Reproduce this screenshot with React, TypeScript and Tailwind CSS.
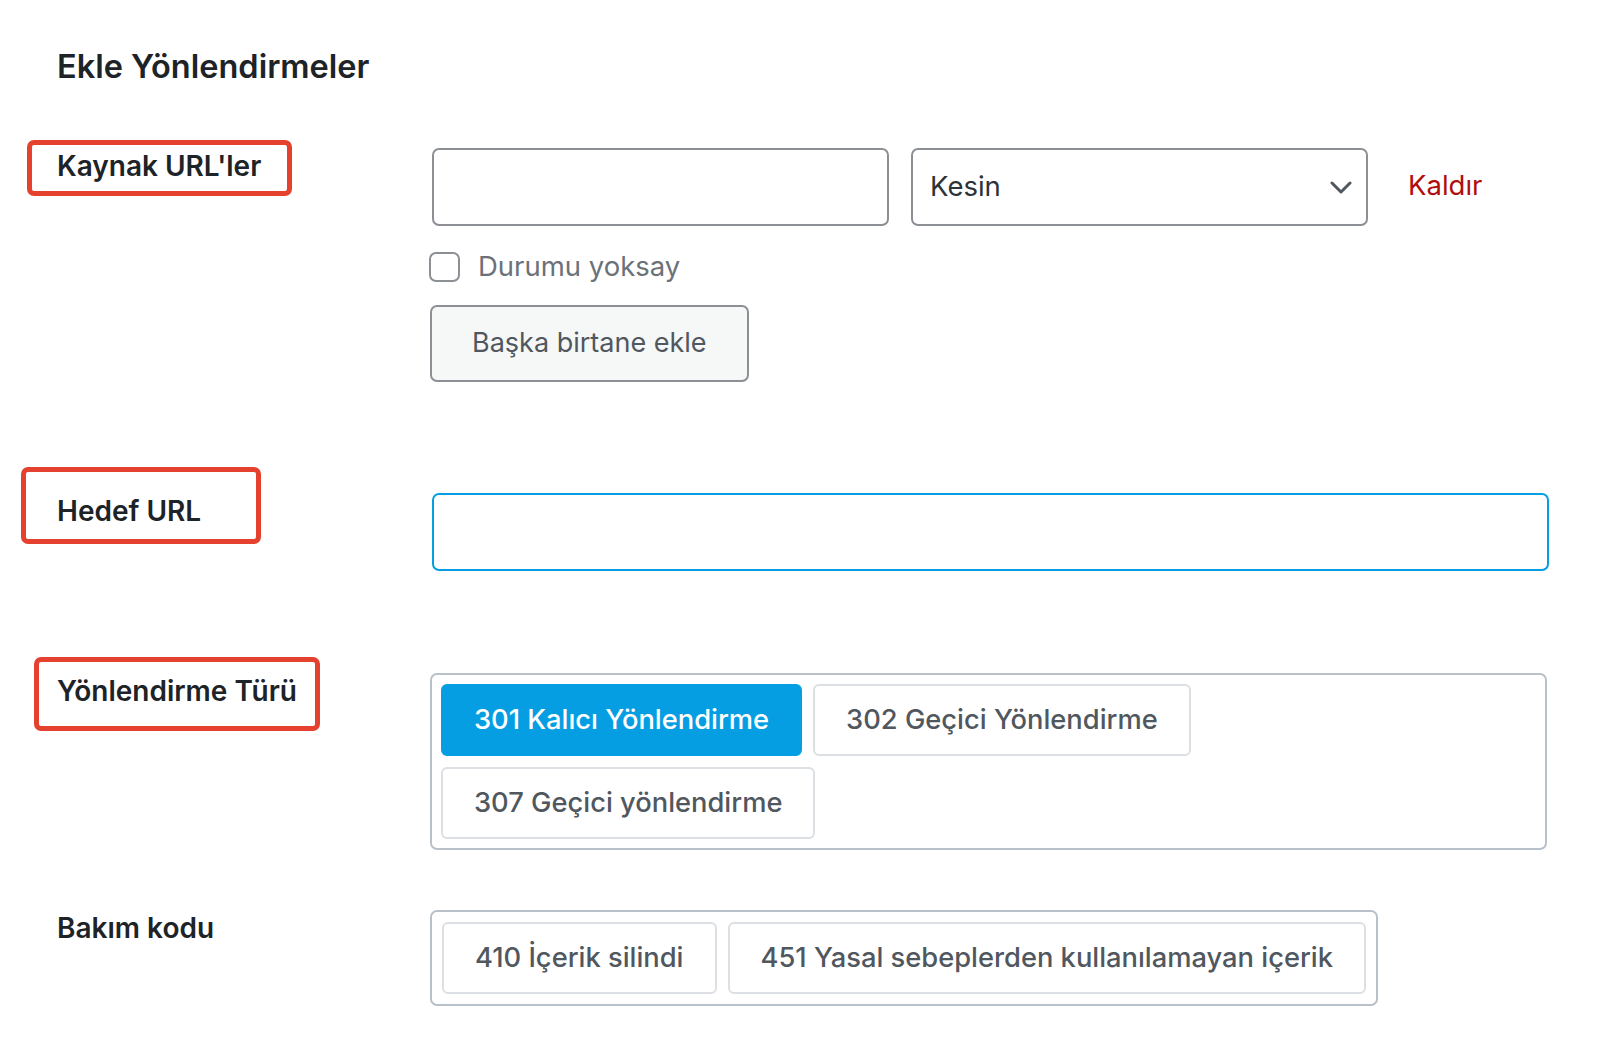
import React from "react";

const font = { fontFamily: "Inter, 'Noto Sans', 'Liberation Sans', sans-serif" };

function Chevron() {
  return (
    <svg width="22" height="13" viewBox="0 0 22 13" fill="none">
      <path d="M2 2 L11 11 L20 2" stroke="#50575e" strokeWidth="3" strokeLinecap="round" strokeLinejoin="round" />
    </svg>
  );
}

function OptButton({ children, active }: { children: React.ReactNode; active?: boolean }) {
  return (
    <div
      className={
        active
          ? "h-[72px] px-[31px] flex items-center rounded-[6px] border-2 border-[#069ee3] bg-[#069ee3] text-white text-[27.3px] font-medium whitespace-nowrap"
          : "h-[72px] px-[31px] flex items-center rounded-[6px] border-2 border-[#dcdfe3] bg-white text-[#50575e] text-[27.3px] font-medium whitespace-nowrap"
      }
    >
      {children}
    </div>
  );
}

export default function App() {
  return (
    <div className="w-[1602px] h-[1050px] bg-white text-[#1d2327] overflow-hidden" style={font}>
      <div className="pt-[48px] pl-[57px]">
        <h1 className="text-[32.5px] leading-[38px] font-semibold text-[#1d2327]">Ekle Yönlendirmeler</h1>
      </div>

      {/* Row 1: Kaynak URL'ler */}
      <div className="flex items-start mt-[62px]">
        <div className="w-[431px] shrink-0">
          <div className="ml-[27px] -mt-[8px] w-[265px] h-[56px] border-[5px] border-[#e5412f] rounded-[7px] pl-[25px] pt-[5px]">
            <div className="text-[28px] leading-[32px] font-semibold whitespace-nowrap">Kaynak URL'ler</div>
          </div>
        </div>
        <div className="flex flex-col">
          <div className="flex items-center">
            <div className="ml-[1px] w-[457px] h-[78px] border-2 border-[#8c8f94] rounded-[7px] bg-white" />
            <div className="ml-[22px] w-[457px] h-[78px] border-2 border-[#8c8f94] rounded-[7px] bg-white flex items-center justify-between pl-[17px] pr-[14px]">
              <span className="text-[27.5px] text-[#2c3338]">Kesin</span>
              <Chevron />
            </div>
            <span className="ml-[40px] text-[27.5px] text-[#b00d0d] -mt-[3px]">Kaldır</span>
          </div>
          <div className="flex items-center mt-[25px] h-[32px]">
            <div className="-ml-[2px] w-[31px] h-[30px] border-2 border-[#8c8f94] rounded-[7px] bg-white" />
            <span className="ml-[18px] text-[27.5px] text-[#6c7178]">Durumu yoksay</span>
          </div>
          <div className="mt-[22px] -ml-[1px] w-fit h-[77px] px-[40px] flex items-center border-2 border-[#8c8f94] rounded-[7px] bg-[#f6f7f7] text-[27px] text-[#50575e]">
            Başka birtane ekle
          </div>
        </div>
      </div>

      {/* Row 2: Hedef URL */}
      <div className="flex items-start mt-[111px]">
        <div className="w-[431px] shrink-0">
          <div className="ml-[21px] -mt-[26px] w-[240px] h-[77px] border-[5px] border-[#e5412f] rounded-[7px] pl-[31px] pt-[23px]">
            <div className="text-[28px] leading-[32px] font-semibold whitespace-nowrap">Hedef URL</div>
          </div>
        </div>
        <div className="ml-[1px] w-[1117px] h-[78px] border-2 border-[#069ee3] rounded-[7px] bg-white" />
      </div>

      {/* Row 3: Yönlendirme Türü */}
      <div className="flex items-start mt-[102px]">
        <div className="w-[431px] shrink-0">
          <div className="ml-[34px] -mt-[16px] w-[286px] h-[74px] border-[5px] border-[#e5412f] rounded-[7px] pl-[18px] pt-[13px]">
            <div className="text-[28px] leading-[32px] font-semibold whitespace-nowrap">Yönlendirme Türü</div>
          </div>
        </div>
        <div className="-ml-[1px] w-[1117px] border-2 border-[#b8c0c9] rounded-[7px] p-[9px] flex flex-wrap gap-[11px]">
          <OptButton active>301 Kalıcı Yönlendirme</OptButton>
          <OptButton>302 Geçici Yönlendirme</OptButton>
          <OptButton>307 Geçici yönlendirme</OptButton>
        </div>
      </div>

      {/* Row 4: Bakım kodu */}
      <div className="flex items-start mt-[60px]">
        <div className="w-[431px] shrink-0 pl-[57px] pt-[2px]">
          <div className="text-[28px] leading-[32px] font-semibold">Bakım kodu</div>
        </div>
        <div className="-ml-[1px] w-fit border-2 border-[#b8c0c9] rounded-[7px] p-[10px] flex gap-[11px]">
          <OptButton>410 İçerik silindi</OptButton>
          <OptButton>451 Yasal sebeplerden kullanılamayan içerik</OptButton>
        </div>
      </div>
    </div>
  );
}
